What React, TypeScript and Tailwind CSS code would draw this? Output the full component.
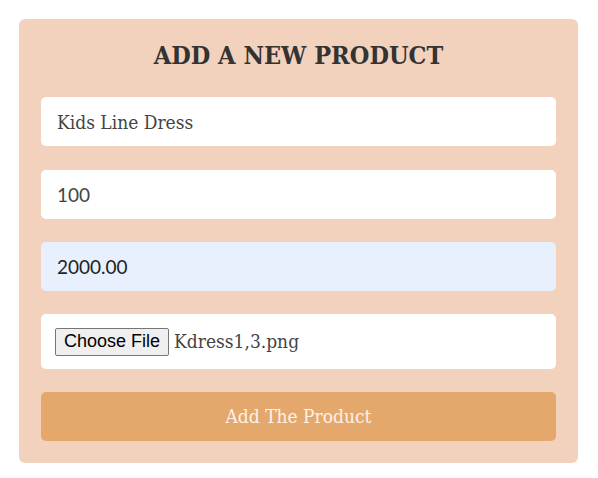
import React from "react";

const inputBase =
  "h-[49px] w-full rounded-[5px] px-[16px] text-[19px] outline-none";

export default function App() {
  return (
    <div className="w-[598px] h-[478px] bg-white pt-[19px] pl-[19px]">
      <div className="w-[559px] h-[444px] bg-[#f2d1bd] rounded-[6px] px-[22px] pt-[17px] flex flex-col">
        <h1 className="text-center text-[25px] font-bold text-[#333333] leading-[40px] h-[40px] mb-[21px] font-['DejaVu_Serif_Condensed','DejaVu_Serif',serif]">
          ADD A NEW PRODUCT
        </h1>
        <div className="flex flex-col gap-[23px]">
          <input
            readOnly
            value="Kids Line Dress"
            className={`${inputBase} mb-[1px] bg-white text-[#444] font-['DejaVu_Serif_Condensed','DejaVu_Serif',serif]`}
          />
          <input
            readOnly
            value="100"
            className={`${inputBase} bg-white text-[#444] font-['Lato',sans-serif]`}
          />
          <input
            readOnly
            value="2000.00"
            className={`${inputBase} bg-[#e8f0fe] text-[#222] font-['Lato',sans-serif]`}
          />
          <div className="h-[55px] w-full bg-white rounded-[5px] pl-[14px] flex items-center">
            <span className="h-[28px] px-[8px] flex items-center bg-[#efefef] border border-[#767676] rounded-[2px] text-[18px] text-black font-['Liberation_Sans',Arial,sans-serif]">
              Choose File
            </span>
            <span className="ml-[5px] text-[19px] text-[#444] font-['DejaVu_Serif_Condensed','DejaVu_Serif',serif]">
              Kdress1,3.png
            </span>
          </div>
          <button className="h-[49px] w-full bg-[#e4a86d] rounded-[5px] text-[19px] text-[#fdf1e8] font-['DejaVu_Serif_Condensed','DejaVu_Serif',serif]">
            Add The Product
          </button>
        </div>
      </div>
    </div>
  );
}
